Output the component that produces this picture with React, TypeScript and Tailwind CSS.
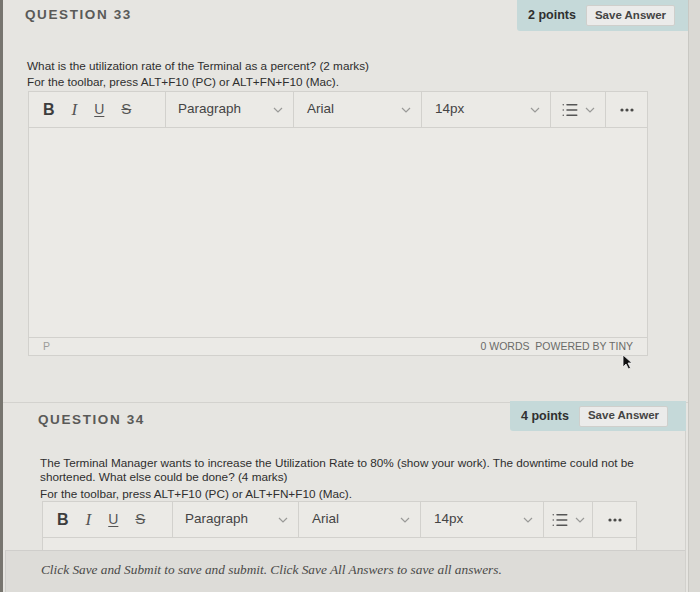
import { List } from "lucide-react";

const font = { sans: "font-['Liberation_Sans',Arial,sans-serif]" };

function Chevron() {
  return (
    <svg width="10" height="6" viewBox="0 0 10 6" className="text-[#9a9a98]">
      <path d="M1 1l4 4 4-4" fill="none" stroke="currentColor" strokeWidth="1.2" />
    </svg>
  );
}

function Dots() {
  return (
    <svg width="14" height="4" viewBox="0 0 14 4" className="text-[#4a4a48]">
      <circle cx="2" cy="2" r="1.6" fill="currentColor" />
      <circle cx="7" cy="2" r="1.6" fill="currentColor" />
      <circle cx="12" cy="2" r="1.6" fill="currentColor" />
    </svg>
  );
}

function Toolbar({ w }: { w: number[] }) {
  return (
    <div className="flex h-[36px] border-b border-[#d2d1cd] text-[#3d3d3d]">
      <div style={{ width: w[0] }} className="flex items-center gap-[17px] pl-[14px] border-r border-[#d2d1cd]">
        <span className="text-[16px] font-bold">B</span>
        <span className="font-['Liberation_Serif',serif] italic text-[17px] text-[#555]">I</span>
        <span className="text-[14px] underline underline-offset-2 decoration-1 text-[#555]">U</span>
        <span className="text-[15px] line-through text-[#555]">S</span>
      </div>
      <div style={{ width: w[1] }} className="flex items-center justify-between pl-[12px] pr-[10px] border-r border-[#d2d1cd]">
        <span className="text-[13.5px] text-[#444]">Paragraph</span>
        <Chevron />
      </div>
      <div style={{ width: w[2] }} className="flex items-center justify-between pl-[13px] pr-[10px] border-r border-[#d2d1cd]">
        <span className="text-[13.5px] text-[#444]">Arial</span>
        <Chevron />
      </div>
      <div style={{ width: w[3] }} className="flex items-center justify-between pl-[13px] pr-[10px] border-r border-[#d2d1cd]">
        <span className="text-[13.5px] text-[#444]">14px</span>
        <Chevron />
      </div>
      <div style={{ width: w[4] }} className="flex items-center justify-center gap-[6px] border-r border-[#d2d1cd]">
        <List size={18} strokeWidth={2} className="text-[#555]" />
        <Chevron />
      </div>
      <div style={{ width: w[5] }} className="flex items-center justify-center">
        <Dots />
      </div>
    </div>
  );
}

function Points({ pts, cls }: { pts: string; cls: string }) {
  return (
    <div className={`flex items-center gap-[10px] bg-[#c5d9d9] rounded-bl-[3px] ${cls}`}>
      <span className="text-[12.5px] font-bold text-[#2f2f2f]">{pts}</span>
      <button className="h-[21px] px-[8px] bg-[#ebebea] border border-[#cfcfcc] rounded-[2px] text-[11.5px] font-bold text-[#444]">
        Save Answer
      </button>
    </div>
  );
}

export default function App() {
  return (
    <div className={`w-[700px] h-[592px] overflow-hidden flex bg-[#e6e5e1] ${font.sans}`}>
      <div className="w-[3px] bg-[#77756f]" />
      <div className="relative w-[685px] flex flex-col">
        {/* question 33 */}
        <div className="flex justify-between h-[31px]">
          <div className="pl-[22px] pt-[5px] text-[13.5px] font-bold tracking-[1.6px] text-[#5a5a58]">QUESTION 33</div>
          <Points pts="2 points" cls="w-[171px] pl-[11px]" />
        </div>
        <div className="pl-[24px] pt-[27px] text-[11.75px] text-[#2e2e2e] leading-[16px]">
          <p>What is the utilization rate of the Terminal as a percent? (2 marks)</p>
          <p>For the toolbar, press ALT+F10 (PC) or ALT+FN+F10 (Mac).</p>
        </div>
        <div className="ml-[25px] mt-[1px] w-[620px] border border-[#d2d1cd] bg-[#ebeae6]">
          <Toolbar w={[137, 128, 128, 129, 55, 41]} />
          <div className="h-[210px] border-b border-[#d2d1cd]" />
          <div className="h-[17px] flex items-center justify-between px-[14px] text-[10.5px] text-[#6a6a68]">
            <span className="text-[#9c9c9a]">P</span>
            <span>0 WORDS&nbsp;&nbsp;POWERED BY TINY</span>
          </div>
        </div>
        <svg width="12" height="16" viewBox="0 0 12 16" className="absolute left-[619px] top-[354px]">
          <path d="M1 1v12l3-3 2.5 5 2-1-2.5-5H10z" fill="#111" stroke="#f2f2f2" strokeWidth="0.8" />
        </svg>

        {/* question 34 */}
        <div className="mt-[46px] flex justify-between border-t border-[#d3d2ce] h-[29px]">
          <div className="pl-[35px] pt-[7px] text-[13.5px] font-bold tracking-[1.6px] text-[#5a5a58]">QUESTION 34</div>
          <Points pts="4 points" cls="w-[176px] pl-[11px] mr-[2px] -mt-[2px]" />
        </div>
        <div className="flex-1 flex flex-col border-r border-[#d2d1cd] mr-[2px]">
          <div className="pl-[37px] pr-[40px] pt-[25px] text-[11.75px] text-[#2e2e2e] leading-[14px]">
            <p>
              The Terminal Manager wants to increase the Utilization Rate to 80% (show your work). The downtime could not be
              shortened. What else could be done? (4 marks)
            </p>
            <p className="mt-[3px]">For the toolbar, press ALT+F10 (PC) or ALT+FN+F10 (Mac).</p>
          </div>
          <div className="ml-[39px] w-[595px] h-[49px] border border-[#d2d1cd] border-b-0 bg-[#ebeae6]">
            <Toolbar w={[130, 126, 122, 123, 49, 43]} />
          </div>
          <div className="ml-[2px] flex-1 border-t border-l border-[#cfcecb] bg-[#dddcd8] pl-[35px] pt-[9px]">
            <p className="font-['Liberation_Serif',serif] italic text-[13.3px] text-[#4a4a48]">
              Click Save and Submit to save and submit. Click Save All Answers to save all answers.
            </p>
          </div>
        </div>
      </div>
      <div className="flex-1 border-l border-[#c9c8c3] bg-[#dad9d4]" />
    </div>
  );
}
